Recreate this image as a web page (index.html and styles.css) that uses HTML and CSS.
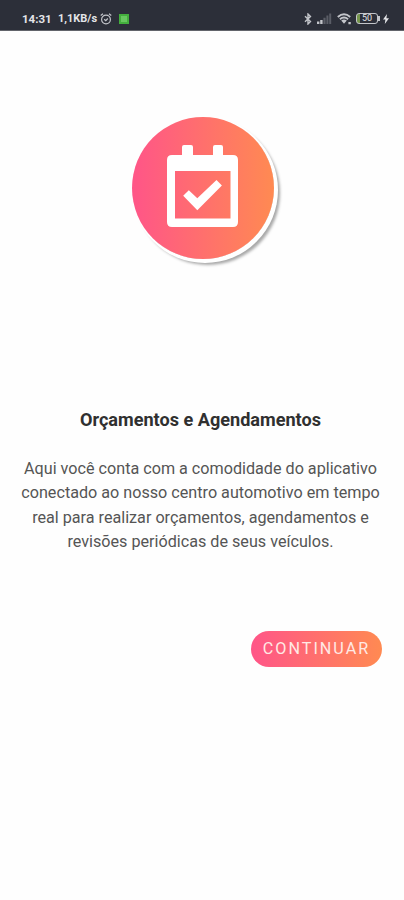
FILE: index.html
```
<!DOCTYPE html>
<html lang="pt-BR">
<head>
    <meta charset="UTF-8">
    <meta name="viewport" content="width=device-width, initial-scale=1.0">
    <title>Orçamentos e Agendamentos</title>
    <link rel="stylesheet" href="styles.css">
</head>
<body>
    <header class="status-bar">
        <div class="status-left">
            <span class="time">14:31</span>
            <span class="speed">1,1KB/s</span>
            <svg class="alarm" width="12" height="12" viewBox="0 0 12 12" fill="none" stroke="#c3c5ca" stroke-width="1.2">
                <circle cx="6" cy="6.5" r="4.4"/>
                <path d="M.7 2.5 3 .8M11.3 2.5 9 .8M4.2 6.2l1.6 1.5 2-2.2"/>
            </svg>
            <span class="app-badge"></span>
        </div>
        <div class="status-right">
            <svg class="bluetooth" width="8" height="12" viewBox="0 0 8 12" fill="none" stroke="#c3c5ca" stroke-width="1.4">
                <path d="M1 3.2 6.5 8.5 4 11V1l2.5 2.5L1 8.8"/>
            </svg>
            <svg class="signal" width="15" height="11" viewBox="0 0 15 11">
                <path fill="#c3c5ca" d="M0 8.5h2.4V11H0zM3.2 7h2.4v4H3.2z"/>
                <path fill="#5a5d66" d="M6.4 4.8h2.2V11H6.4zM9.4 2.6h2V11h-2zM12.2.4h2V11h-2z"/>
            </svg>
            <svg class="wifi" width="15" height="12" viewBox="0 0 15 12" fill="none" stroke="#c3c5ca" stroke-width="1.9">
                <path d="M.8 4Q7 -1.5 13.2 4M2.9 6.2Q7 2.7 11.1 6.2"/>
                <path fill="#c3c5ca" stroke="none" d="M4.2 7.6Q7 5.5 9.8 7.6L7 10.8zM11.4 9h2.4v2.3h-2.4z"/>
            </svg>
            <div class="battery"><span>50</span></div>
            <svg class="bolt" width="6" height="10" viewBox="0 0 6 10">
                <path fill="#e4e5e8" d="M4 0 0 5.6h2.4L1.8 10 6 4.2H3.4z"/>
            </svg>
        </div>
    </header>

    <main class="intro">
        <div class="intro-icon">
            <svg width="72" height="83" viewBox="0 0 72 83">
                <path fill="#fff" fill-rule="evenodd" d="M5 10h10V2q0-2 2-2h7q2 0 2 2v8h20V2q0-2 2-2h6q2 0 2 2v8h10q5 0 5 5v62q0 5-5 5H5q-5 0-5-5V15q0-5 5-5zM8 26v47.5h55.5V26z"/>
                <path fill="#fff" d="m16.2 50.8 5.6-5.5 8.5 8L49.5 35l5.4 5.6-24.6 24.7z"/>
            </svg>
        </div>
        <h1>Orçamentos e Agendamentos</h1>
        <p>Aqui você conta com a comodidade do aplicativo conectado ao nosso centro automotivo em tempo real para realizar orçamentos, agendamentos e revisões periódicas de seus veículos.</p>
        <button class="continue-button">CONTINUAR</button>
    </main>
</body>
</html>
```

FILE: styles.css
```
* {
    box-sizing: border-box;
}

body {
    margin: 0;
    min-height: 900px;
    background-color: #fefefe;
    font-family: Roboto, sans-serif;
}

.status-bar {
    display: flex;
    justify-content: space-between;
    height: 31px;
    padding: 7px 15px 0 22px;
    background-color: #2c2f39;
    border-bottom: 1px solid #62646b;
    color: #e4e5e8;
}

.status-left,
.status-right {
    display: flex;
    align-items: center;
    height: 23px;
}

.time {
    width: 36px;
    font-size: 11.5px;
    font-weight: bold;
}

.speed {
    width: 42px;
    font-size: 11px;
    font-weight: bold;
    white-space: nowrap;
}

.app-badge {
    width: 10px;
    height: 10px;
    margin-left: 7px;
    background-color: #68c760;
    border: 2px solid #43ae3d;
}

.signal {
    margin-left: 5px;
}

.wifi {
    margin-left: 5px;
}

.battery {
    position: relative;
    width: 22px;
    height: 11px;
    margin-left: 4px;
    border: 1.5px solid #c3c5ca;
    border-radius: 3px;
    background: linear-gradient(90deg, #75944c 3px, #2c2f39 3px);
    font-size: 9px;
    line-height: 9px;
    text-align: center;
}

/* battery tip */
.battery::after {
    content: "";
    position: absolute;
    top: 2px;
    right: -3px;
    width: 2px;
    height: 5px;
    background-color: #c3c5ca;
}

.bolt {
    margin-left: 5px;
}

.intro {
    display: flex;
    flex-direction: column;
    align-items: center;
    padding: 86px 20px 0;
}

.intro-icon {
    display: flex;
    justify-content: center;
    width: 142px;
    height: 142px;
    margin-left: 1px;
    padding-top: 28px;
    border-radius: 50%;
    background: linear-gradient(90deg, #ff5588, #ff8a52);
    box-shadow: 2px 2px 0 2px #fff, 5px 5px 3px 1px #a8a8a8;
}

h1 {
    margin: 149px 0 0;
    padding-right: 3px;
    color: #303030;
    font-size: 18.1px;
    line-height: 24px;
    white-space: nowrap;
}

p {
    width: 370px;
    margin: 25px 0 0;
    padding-right: 3px;
    color: #555;
    font-size: 16.17px;
    line-height: 24.3px;
    text-align: center;
}

.continue-button {
    align-self: flex-end;
    width: 131px;
    height: 36px;
    margin: 77px 2px 0 0;
    padding: 0 0 2px;
    border: none;
    border-radius: 18px;
    background: linear-gradient(90deg, #ff5588, #ff8a52);
    color: #ffe9e4;
    font-family: inherit;
    font-size: 16.2px;
    letter-spacing: 2px;
}
```
